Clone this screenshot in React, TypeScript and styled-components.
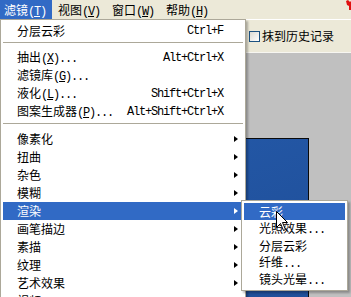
import React from "react";
import styled, { createGlobalStyle } from "styled-components";

const Global = createGlobalStyle`
  html, body { margin: 0; padding: 0; background: #c0c0c0; }
  body { font-family: "Noto Sans CJK SC", "Liberation Sans", sans-serif; font-size: 12px; color: #000; }
`;

const Frame = styled.div`
  position: relative;
  width: 351px;
  height: 297px;
  overflow: hidden;
  display: flex;
  flex-direction: column;
  background: #c0c0c0;
`;

const MenuBar = styled.div`
  display: flex;
  height: 19px;
  background: #ece9d8;
  border-bottom: 1px solid #ffffff;
  flex-shrink: 0;
`;

const BarItem = styled.div<{ $active?: boolean }>`
  width: 52px;
  margin-right: 2px;
  padding-left: 4px;
  box-sizing: border-box;
  height: 19px;
  line-height: 19px;
  white-space: nowrap;
  background: ${(p) => (p.$active ? "#316ac5" : "transparent")};
  color: ${(p) => (p.$active ? "#ffffff" : "#000000")};
`;

const Cjk = styled.span`
  font-family: "Noto Sans CJK SC", sans-serif;
  font-size: 12px;
`;

const Ascii = styled.span`
  font-family: "Liberation Mono", monospace;
  font-size: 12px;
  letter-spacing: -1.2px;
`;

const U = styled.span`
  text-decoration: underline;
`;

const RedMark = styled.svg`
  margin-left: auto;
  margin-right: -4px;
  flex-shrink: 0;
`;

const OptionsBar = styled.div`
  height: 32px;
  flex-shrink: 0;
  background: #ece9d8;
  border-bottom: 1px solid #f7f6f1;
  display: flex;
  align-items: center;
  padding-left: 249px;
  gap: 2px;
`;

const CheckBox = styled.span`
  width: 11px;
  height: 11px;
  box-sizing: border-box;
  border: 1px solid #1c5180;
  background: linear-gradient(135deg, #dcdbd3, #ffffff);
  flex-shrink: 0;
`;

const CheckLabel = styled.span`
  font-family: "Noto Sans CJK SC", sans-serif;
  font-size: 12px;
  white-space: nowrap;
  line-height: 14px;
`;

const Canvas = styled.div`
  position: relative;
  flex: 1;
  background: #c0c0c0;
`;

const DocWindow = styled.div`
  position: absolute;
  left: 100px;
  top: 85px;
  width: 209px;
  height: 300px;
  box-sizing: border-box;
  border: 1px solid #0a0a0a;
  background: linear-gradient(160deg, #2459a8 0%, #1f4f9a 55%, #22539f 100%);
`;

const Menu = styled.div<{ $left: number; $top: number; $width: number }>`
  position: absolute;
  left: ${(p) => p.$left}px;
  top: ${(p) => p.$top}px;
  width: ${(p) => p.$width}px;
  box-sizing: border-box;
  border: 1px solid #aca899;
  padding: 2px;
  background: #ffffff;
  box-shadow: 2px 2px 2px rgba(0, 0, 0, 0.28);
`;

const Item = styled.div<{ $active?: boolean; $h: number; $pl: number }>`
  display: flex;
  align-items: center;
  height: ${(p) => p.$h}px;
  padding-left: ${(p) => p.$pl}px;
  white-space: nowrap;
  background: ${(p) => (p.$active ? "#316ac5" : "transparent")};
  color: ${(p) => (p.$active ? "#ffffff" : "#000000")};
`;

const Label = styled.span`
  flex: 1;
  line-height: 14px;
`;

const Shortcut = styled.span`
  font-family: "Liberation Mono", monospace;
  font-size: 12px;
  letter-spacing: -1.2px;
  line-height: 14px;
`;

const ArrowSlot = styled.span`
  width: 20px;
  display: flex;
  align-items: center;
  padding-left: 11px;
  box-sizing: border-box;
`;

const Arrow = styled.span<{ $active?: boolean }>`
  width: 0;
  height: 0;
  border-top: 3.5px solid transparent;
  border-bottom: 3.5px solid transparent;
  border-left: 4px solid ${(p) => (p.$active ? "#ffffff" : "#000000")};
`;

const Separator = styled.div`
  height: 1px;
  background: #aca899;
  margin: 2px 0 6px;
`;

const Cursor = styled.svg`
  position: absolute;
  left: 276px;
  top: 211px;
`;

type Entry =
  | { sep: true }
  | { text: string; key?: string; dots?: boolean; shortcut?: string; sub?: boolean; active?: boolean };

const mainItems: Entry[] = [
  { text: "分层云彩", shortcut: "Ctrl+F" },
  { sep: true },
  { text: "抽出", key: "X", dots: true, shortcut: "Alt+Ctrl+X" },
  { text: "滤镜库", key: "G", dots: true },
  { text: "液化", key: "L", dots: true, shortcut: "Shift+Ctrl+X" },
  { text: "图案生成器", key: "P", dots: true, shortcut: "Alt+Shift+Ctrl+X" },
  { sep: true },
  { text: "像素化", sub: true },
  { text: "扭曲", sub: true },
  { text: "杂色", sub: true },
  { text: "模糊", sub: true },
  { text: "渲染", sub: true, active: true },
  { text: "画笔描边", sub: true },
  { text: "素描", sub: true },
  { text: "纹理", sub: true },
  { text: "艺术效果", sub: true },
  { text: "视频", sub: true },
];

const subItems: { text: string; dots?: boolean; active?: boolean }[] = [
  { text: "云彩", active: true },
  { text: "光照效果", dots: true },
  { text: "分层云彩" },
  { text: "纤维", dots: true },
  { text: "镜头光晕", dots: true },
];

const LabelText: React.FC<{ text: string; k?: string; dots?: boolean }> = ({ text, k, dots }) => (
  <Label>
    <Cjk>{text}</Cjk>
    {k && (
      <Ascii>
        (<U>{k}</U>)
      </Ascii>
    )}
    {dots && <Ascii>...</Ascii>}
  </Label>
);

const barItems = [
  { text: "滤镜", key: "T", active: true },
  { text: "视图", key: "V" },
  { text: "窗口", key: "W" },
  { text: "帮助", key: "H" },
];

export default function App() {
  return (
    <>
      <Global />
      <Frame>
        <MenuBar>
          {barItems.map((b) => (
            <BarItem key={b.text} $active={b.active}>
              <Cjk>{b.text}</Cjk>
              <Ascii>
                (<U>{b.key}</U>)
              </Ascii>
            </BarItem>
          ))}
          <RedMark width="10" height="12" viewBox="0 0 10 12">
            <path d="M1 1 L3 0 L5 2 L7 0 L9 1 L8 5 L6 6 L6 10 L4 10 L4 6 L2 5 Z" fill="#e01010" />
          </RedMark>
        </MenuBar>
        <OptionsBar>
          <CheckBox />
          <CheckLabel>抹到历史记录</CheckLabel>
        </OptionsBar>
        <Canvas>
          <DocWindow />
        </Canvas>

        <Menu $left={0} $top={19} $width={246}>
          {mainItems.map((it, i) =>
            "sep" in it ? (
              <Separator key={i} />
            ) : (
              <Item key={i} $h={18} $pl={14} $active={it.active}>
                <LabelText text={it.text} k={it.key} dots={it.dots} />
                {it.shortcut && <Shortcut>{it.shortcut}</Shortcut>}
                <ArrowSlot>{it.sub && <Arrow $active={it.active} />}</ArrowSlot>
              </Item>
            )
          )}
        </Menu>

        <Menu $left={241} $top={200} $width={107}>
          {subItems.map((it) => (
            <Item key={it.text} $h={17} $pl={15} $active={it.active}>
              <LabelText text={it.text} dots={it.dots} />
            </Item>
          ))}
        </Menu>

        <Cursor width="13" height="21" viewBox="0 0 13 21">
          <path
            d="M0.5 0.5 L0.5 16.5 L4.5 12.5 L7.5 19.5 L9.5 18.5 L6.5 11.5 L11.5 11.5 Z"
            fill="#ffffff"
            stroke="#000000"
            strokeWidth="1"
          />
        </Cursor>
      </Frame>
    </>
  );
}
